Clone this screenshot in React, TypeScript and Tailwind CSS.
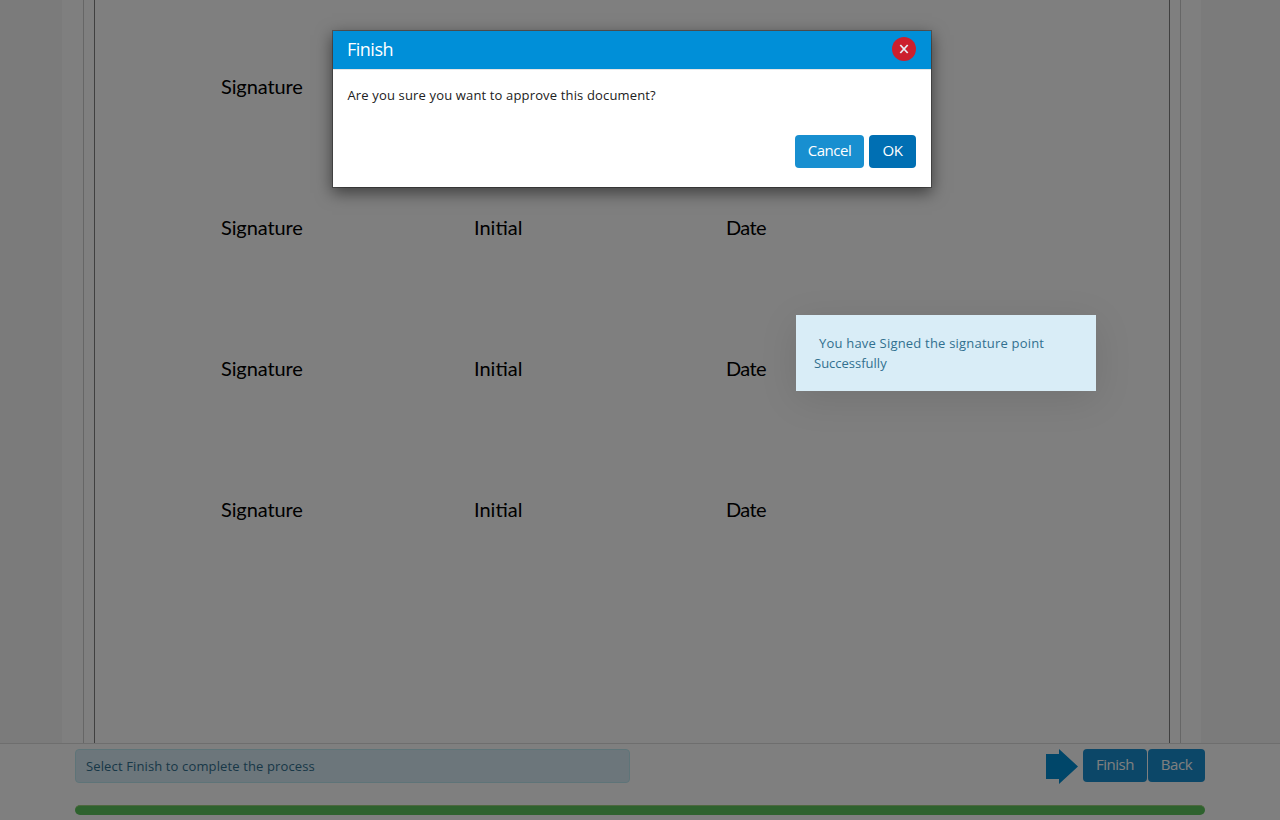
import React from "react";

const uiFont = "font-['Open_Sans','Noto_Sans',sans-serif]";

const rows = [
  { id: "first", fields: ["Signature"] },
  { id: "second", fields: ["Signature", "Initial", "Date"] },
  { id: "third", fields: ["Signature", "Initial", "Date"] },
  { id: "fourth", fields: ["Signature", "Initial", "Date"] },
];

const fieldTracking: Record<string, string> = {
  Signature: "tracking-[-0.1px]",
  Initial: "tracking-[0px]",
  Date: "-ml-px tracking-[-0.6px]",
};

function SignatureRow({ fields }: { fields: string[] }) {
  return (
    <div className="grid h-[141px] grid-cols-[253px_253px_200px] items-center pl-[126px] text-[20px] leading-6 text-black">
      {fields.map((field) => (
        <span key={field} className={fieldTracking[field]}>
          {field}
        </span>
      ))}
    </div>
  );
}

function Document() {
  return (
    <main className="flex h-[743px] justify-center bg-[#f6f6f6] pr-[17px]">
      <div className="w-[1139px] bg-white pl-[21px] pr-[20px]">
        <div className="h-full w-[1098px] border-x border-[#cccccc] px-[10px]">
          <div className="h-full border-x border-[#808080] pt-[15px] font-[Lato,sans-serif]">
            {rows.map((row) => (
              <SignatureRow key={row.id} fields={row.fields} />
            ))}
          </div>
        </div>
      </div>
    </main>
  );
}

function Footer() {
  return (
    <footer className="h-[77px] border-t border-[#dddddd] bg-white px-[75px] pt-[5px]">
      <div className="flex h-[35px] items-start justify-between">
        <div className="flex h-[34px] w-[555px] items-center rounded border border-[#bce8f1] bg-[#d9edf7] pl-[10px] pt-[2px] text-[13px] text-[#31708f]">
          <span className="tracking-[0.13px]">Select Finish to complete the process</span>
        </div>
        <div className="flex items-start">
          <svg width="33" height="35" viewBox="0 0 33 35" className="mr-[4px]">
            <path d="M0 5H13V0L32 17.5L13 35V30H0Z" fill="#008cd2" />
          </svg>
          <button className="mr-px h-[33px] w-[64px] rounded bg-[#188fd0] pb-[2px] text-[15px] tracking-[-0.45px] text-white">
            Finish
          </button>
          <button className="h-[33px] w-[57px] rounded bg-[#188fd0] pb-[2px] text-[15px] tracking-[-0.45px] text-white">
            Back
          </button>
        </div>
      </div>
      <div className="mt-[21px] h-[10px] rounded-full border-t border-[#9ad07c] bg-[#5cc45c]" />
    </footer>
  );
}

function ConfirmDialog() {
  return (
    <section
      role="dialog"
      className="absolute left-[332px] top-[30px] h-[158px] w-[600px] border border-black/30 bg-white bg-clip-padding shadow-[0_5px_15px_rgba(0,0,0,0.5)]"
    >
      <header className="flex h-[39px] items-center justify-between border-b border-[#e5e5e5] bg-[#008fd8] bg-clip-padding pb-[2px] pl-[14px] pr-[15px] text-white">
        <h4 className="text-[18px] leading-6 tracking-[-0.5px]">Finish</h4>
        <button className="flex size-[24px] items-center justify-center rounded-full bg-[#cc1f2d]">
          <svg width="10" height="10" viewBox="0 0 10 10" stroke="#e6eef5" strokeWidth="1.8">
            <path d="M1.3 1L8.7 9M8.7 1L1.3 9" />
          </svg>
        </button>
      </header>
      <p className="h-[65px] pl-[14.5px] pt-[15px] text-[13px] leading-5 tracking-[0.15px] text-[#212121]">
        Are you sure you want to approve this document?
      </p>
      <div className="flex justify-end gap-[5px] pr-[15px] text-[15px] tracking-[-0.45px] text-white">
        <button className="h-[33px] w-[69px] rounded bg-[#188fd0] pb-[2px]">Cancel</button>
        <button className="h-[33px] w-[47px] rounded bg-[#006fb3] pb-[2px]">OK</button>
      </div>
    </section>
  );
}

function Toast() {
  return (
    <div className="absolute left-[796px] top-[315px] h-[76px] w-[300px] bg-[#d9edf7] px-[18px] pt-[18px] text-[13px] leading-5 text-[#31708f] shadow-[0_8px_38px_rgba(0,0,0,0.1)]">
      <span className="pl-[5px] tracking-[0.2px]">You have Signed the signature point</span>
      <br />
      <span>Successfully</span>
    </div>
  );
}

export default function App() {
  return (
    <div className={`relative h-[820px] w-[1280px] overflow-hidden ${uiFont}`}>
      <Document />
      <Footer />
      <div className="absolute inset-0 bg-black/50" />
      <ConfirmDialog />
      <Toast />
    </div>
  );
}
